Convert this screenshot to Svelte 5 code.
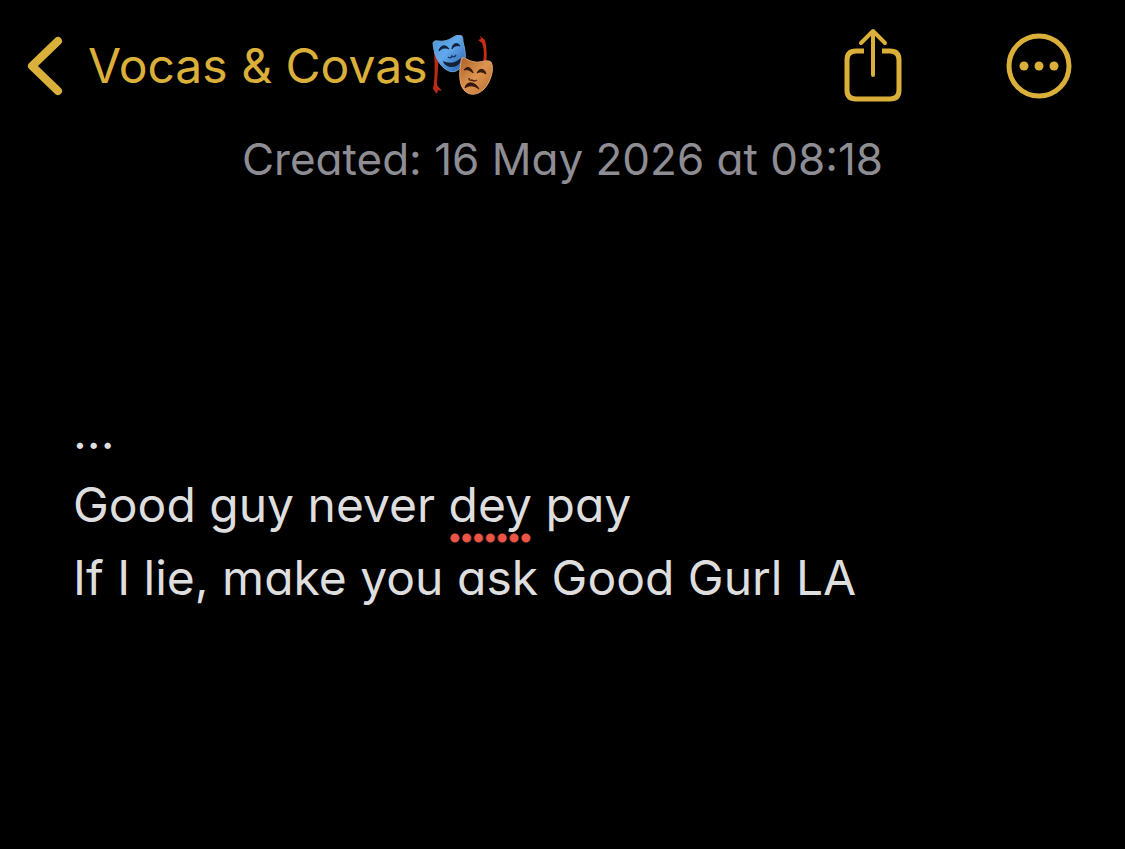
<script>
  let folder = 'Vocas & Covas';
  let created = '16 May 2026 at 08:18';

  // words flagged by the spell checker are split out so they can be underlined
  let lines = [
    [{ text: '...' }],
    [{ text: 'Good guy never ' }, { text: 'dey', misspelt: true }, { text: ' pay' }],
    [{ text: 'If I lie, make you ask Good Gurl LA' }]
  ];
</script>

<div class="note">
  <header>
    <a class="back" href="#folder">
      <svg class="chevron" viewBox="0 0 34 58" aria-hidden="true">
        <path d="M30 4 L4 29 L30 54" />
      </svg>
      <span class="folder">{folder}</span>
      <svg class="masks" viewBox="0 0 64 62" aria-hidden="true">
        <defs>
          <linearGradient id="blue" x1="0" y1="0" x2="1" y2="1">
            <stop offset="0" stop-color="#4c93d6" />
            <stop offset="0.45" stop-color="#62a8ea" />
            <stop offset="1" stop-color="#255cae" />
          </linearGradient>
          <linearGradient id="gold" x1="0" y1="0" x2="1" y2="1">
            <stop offset="0" stop-color="#a95f26" />
            <stop offset="0.5" stop-color="#dc9450" />
            <stop offset="1" stop-color="#b96b30" />
          </linearGradient>
        </defs>
        <path d="M2 16 L6 20 C7 31 5 42 5 50 L10 56 L6 55 L5 59 L1 54 C3 44 3 30 2 16Z" fill="#b92b14" />
        <path d="M50 31 C53 22 52 13 50 8 L46 5 L49 4 L48 1 L53 5 C55 13 55 23 54 33Z" fill="#c62d13" />
        <path d="M1 8 C3 4 7 7 12 6 C19 5 22 0 28 0 C32 1 30 5 32 11 C34 20 34 26 29 32 C25 37 20 38 15 35 C7 31 2 20 1 8Z" fill="url(#blue)" stroke="#6fa9d8" />
        <path d="M7 16 C8 10 14 9 17 14 C13 12 10 13 7 16Z M20 14 C20 8 26 7 28 11 C25 10 22 11 20 14Z" fill="#10233d" stroke="#10233d" stroke-linejoin="round" />
        <path d="M16 22 Q19 24 20 21 Q22 23 24 20" fill="none" stroke="#173b6c" stroke-width="1.5" />
        <path d="M11 26 C17 29 24 28 29 23 C29 29 25 32 20 32 C16 32 12 30 11 26Z" fill="#142238" />
        <path d="M30 23 C33 22 36 26 43 27 C49 28 54 24 59 27 C63 34 58 48 52 54 C46 60 38 61 33 56 C26 50 27 34 30 23Z" fill="url(#gold)" stroke="#e3a468" />
        <path d="M32 35 C35 30 40 33 41 38 C38 35 35 34 32 35Z M45 38 C48 32 53 34 54 39 C51 37 48 36 45 38Z" fill="#34190d" stroke="#34190d" stroke-linejoin="round" />
        <path d="M37 43 Q37 46 40 45 Q42 47 45 45" fill="none" stroke="#51250f" stroke-width="1.5" />
        <path d="M33 53 C34 46 43 46 47 54 C42 50 37 50 33 53Z" fill="#35160c" stroke="#35160c" stroke-linejoin="round" />
      </svg>
    </a>

    <div class="actions">
      <button aria-label="Share">
        <svg class="share" viewBox="0 0 58 74" aria-hidden="true">
          <path d="M20 22 H12 Q3 22 3 31 V61 Q3 70 12 70 H46 Q55 70 55 61 V31 Q55 22 46 22 H38" stroke-linecap="butt" />
          <path class="arrow" d="M29 46 V4 M17 14 L29 2 L41 14" />
        </svg>
      </button>
      <button aria-label="More">
        <svg class="more" viewBox="0 0 66 66" aria-hidden="true">
          <circle cx="33" cy="33" r="30" />
          <g class="dots">
            <circle cx="18" cy="33" r="4.500" />
            <circle cx="33" cy="33" r="4.500" />
            <circle cx="48" cy="33" r="4.500" />
          </g>
        </svg>
      </button>
    </div>
  </header>

  <p class="created">Created: {created}</p>

  <main>
    {#each lines as line}
      <p>{#each line as part}<span class:misspelt={part.misspelt}>{part.text}</span>{/each}</p>
    {/each}
  </main>
</div>

<style>
  :global(body) {
    margin: 0;
    background: #000;
  }

  .note {
    font-family: Inter, 'Liberation Sans', sans-serif;
    color: #dededf;
  }

  header {
    display: flex;
    align-items: center;
    justify-content: space-between;
    padding: 26px 53px 0 28px;
  }

  .back {
    display: flex;
    align-items: center;
    color: #dbb03a;
    font-size: 48px;
    line-height: 80px;
    text-decoration: none;
    white-space: nowrap;
  }

  .chevron {
    width: 34px;
    height: 58px;
    margin-right: 26px;
  }

  .masks {
    width: 64px;
    height: 62px;
    margin-left: 4px;
  }

  .actions {
    display: flex;
    align-items: center;
    gap: 104px;
  }

  button {
    display: flex;
    padding: 0;
    border: 0;
    background: none;
    color: #dbb03a;
    cursor: pointer;
  }

  .chevron,
  .share,
  .more {
    fill: none;
    stroke: currentColor;
    stroke-width: 5;
    stroke-linecap: round;
    stroke-linejoin: round;
    overflow: visible;
  }

  .chevron {
    stroke-width: 8;
  }

  .share {
    width: 58px;
    height: 74px;
  }

  .arrow {
    stroke-width: 4;
  }

  .more {
    width: 66px;
    height: 66px;
  }

  .dots {
    fill: currentColor;
    stroke: none;
  }

  p {
    margin: 0;
  }

  .created,
  main {
    font-feature-settings: 'cv11';
  }

  .created {
    margin-top: 21px;
    color: #8e8d94;
    font-size: 44px;
    line-height: 64px;
    text-align: center;
  }

  main {
    padding: 204px 73px 72px;
    font-size: 48px;
    line-height: 73px;
  }

  .misspelt {
    padding-bottom: 9px;
    background: radial-gradient(circle, #ec5545 4px, transparent 5px) left bottom / 12px 10px;
    background-repeat: round no-repeat;
  }
</style>
